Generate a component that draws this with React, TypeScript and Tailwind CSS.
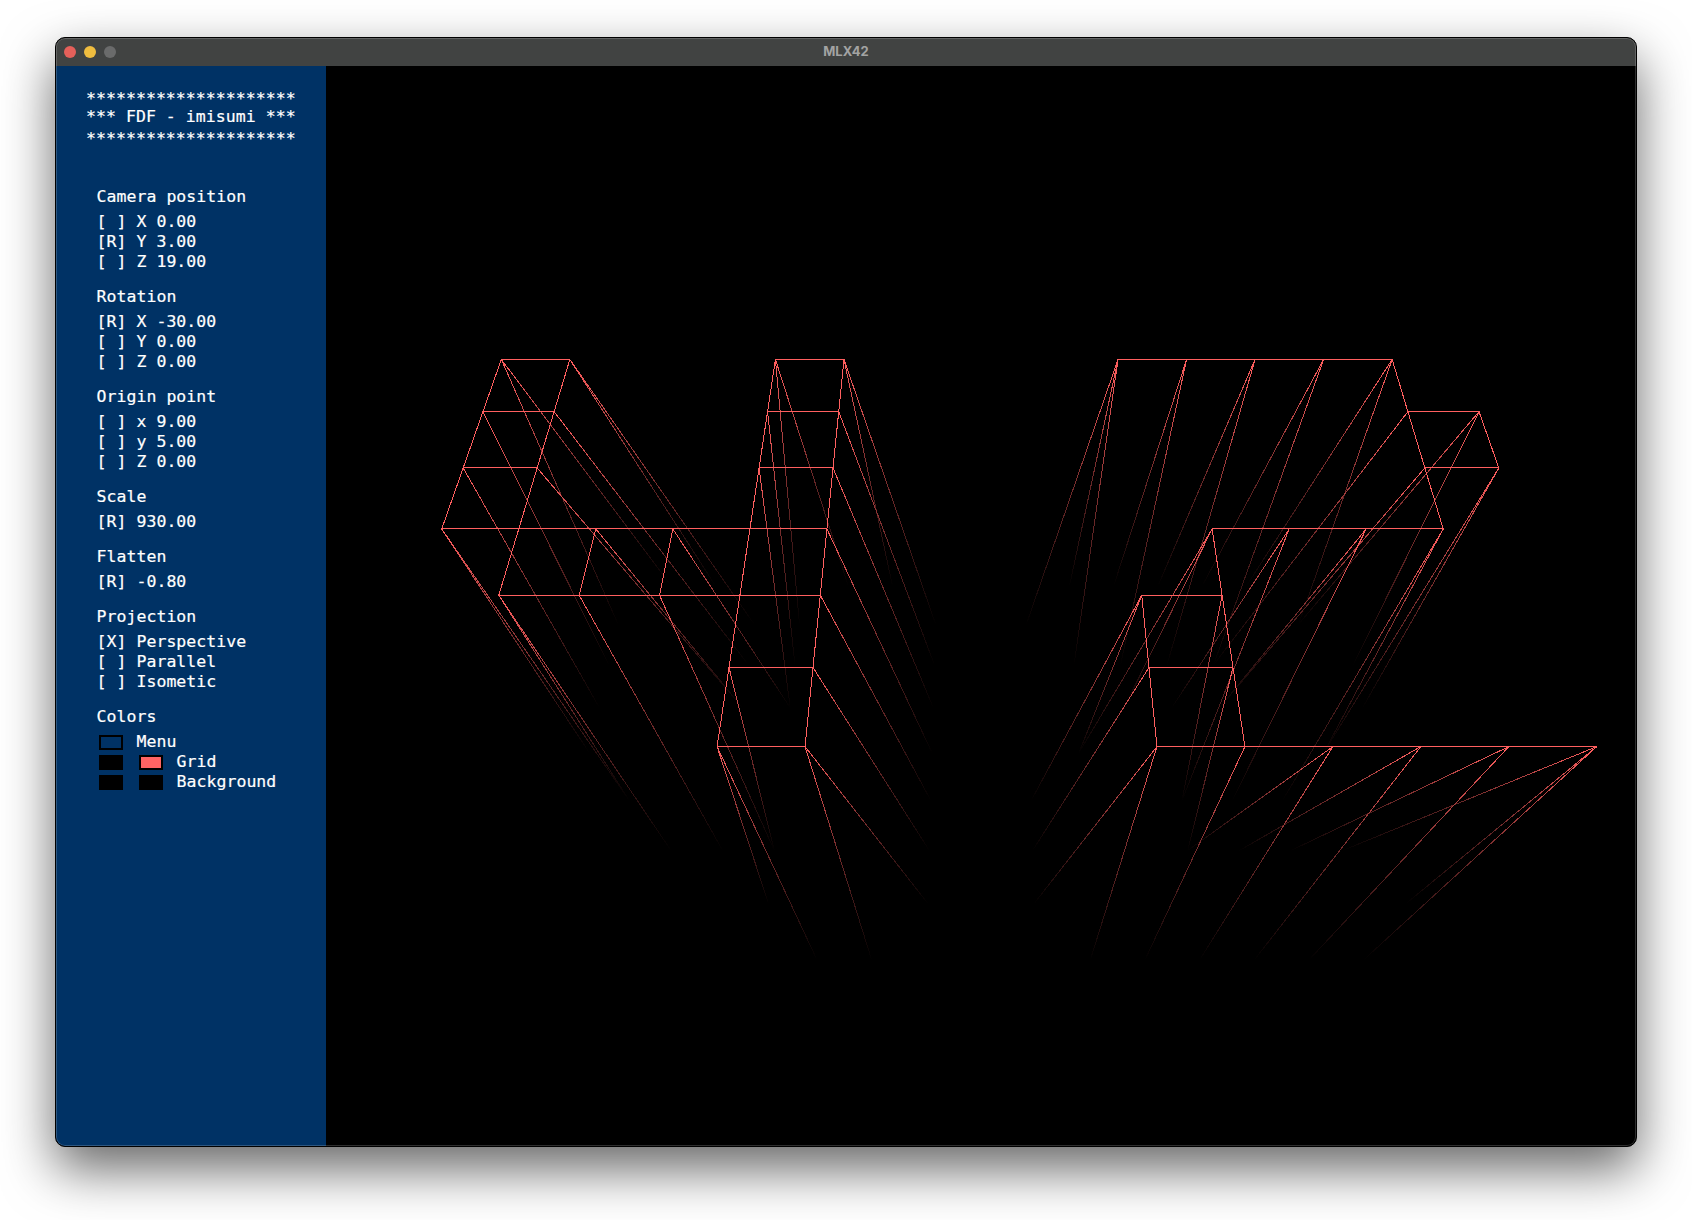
import React from "react";

const MAP = [
  "0 0 0 0 0 0 0 0 0 0 0 0 0 0 0 0 0 0 0",
  "0 0 0 0 0 0 0 0 0 0 0 0 0 0 0 0 0 0 0",
  "0 0 1 1 0 0 1 1 0 0 0 1 1 1 1 1 0 0 0",
  "0 0 1 1 0 0 1 1 0 0 0 0 0 0 0 1 1 0 0",
  "0 0 1 1 0 0 1 1 0 0 0 0 0 0 0 1 1 0 0",
  "0 0 1 1 1 1 1 1 0 0 0 0 1 1 1 1 0 0 0",
  "0 0 0 1 1 1 1 1 0 0 0 1 1 0 0 0 0 0 0",
  "0 0 0 0 0 0 1 1 0 0 0 1 1 0 0 0 0 0 0",
  "0 0 0 0 0 0 1 1 0 0 0 1 1 1 1 1 1 0 0",
  "0 0 0 0 0 0 0 0 0 0 0 0 0 0 0 0 0 0 0",
  "0 0 0 0 0 0 0 0 0 0 0 0 0 0 0 0 0 0 0",
].map((r) => r.split(" ").map(Number));

// Canvas-space projection (canvas 1310 x 1080; centre at 655, 540)
const C30 = Math.cos(Math.PI / 6);
function project(c: number, r: number) {
  const top = MAP[r][c] === 1;
  const X = c - 9;
  const Y = r - 5;
  const Z = top ? 8 : 0;
  const w = 19 - Z * C30 - Y * 0.5;
  return {
    x: 655 + (930 * X) / w,
    y: 540 + (930 * (Y * C30 + 3 - Z * 0.5)) / w,
    top,
  };
}

type Edge = { id: string; x1: number; y1: number; x2: number; y2: number; a: boolean; b: boolean };
const edges: Edge[] = [];
for (let r = 0; r < MAP.length; r++) {
  for (let c = 0; c < MAP[0].length; c++) {
    const p = project(c, r);
    const add = (q: ReturnType<typeof project>, s: string) => {
      if (!p.top && !q.top) return;
      edges.push({ id: `g${r}_${c}_${s}`, x1: p.x, y1: p.y, x2: q.x, y2: q.y, a: p.top, b: q.top });
    };
    if (c + 1 < MAP[0].length) add(project(c + 1, r), "h");
    if (r + 1 < MAP.length) add(project(c, r + 1), "v");
  }
}
edges.sort((e, f) => Number(e.a && e.b) - Number(f.a && f.b));

const RED = "#ff5f5f";
const MID = "#702a2a";

function Wireframe() {
  return (
    <svg width="1310" height="1080" viewBox="0 0 1310 1080" className="block" shapeRendering="crispEdges">
      <defs>
        {edges
          .filter((e) => !(e.a && e.b))
          .map((e) => (
            <linearGradient key={e.id} id={e.id} gradientUnits="userSpaceOnUse" x1={e.x1} y1={e.y1} x2={e.x2} y2={e.y2}>
              <stop offset="0" stopColor={e.a ? RED : "#000000"} />
              <stop offset="0.5" stopColor={MID} />
              <stop offset="1" stopColor={e.b ? RED : "#000000"} />
            </linearGradient>
          ))}
      </defs>
      {edges.map((e) => (
        <line
          key={e.id}
          x1={e.x1}
          y1={e.y1}
          x2={e.x2}
          y2={e.y2}
          stroke={e.a && e.b ? RED : `url(#${e.id})`}
          strokeWidth="1"
        />
      ))}
    </svg>
  );
}

function Row({ children }: { children: React.ReactNode }) {
  return <div className="h-5 leading-5 whitespace-pre">{children}</div>;
}

function Stars() {
  return <div className="h-5 pt-[2px] leading-5 whitespace-pre">*********************</div>;
}

function Section({ title, rows }: { title: string; rows: string[] }) {
  return (
    <section className="mb-[15px]">
      <div className="h-5 leading-5 mb-[5px] whitespace-pre">{title}</div>
      {rows.map((t) => (
        <Row key={t}>{t}</Row>
      ))}
    </section>
  );
}

function Swatch({ fill }: { fill: string }) {
  return <span className={`block w-6 h-[15px] border-2 border-black ${fill}`} />;
}

export default function App() {
  return (
    <div className="min-h-[1220px] bg-white pl-[55px] pt-[37px] overflow-hidden">
      <div className="relative w-[1582px] h-[1110px] rounded-[10px] overflow-hidden border border-black bg-black shadow-[0_22px_52px_0_rgba(0,0,0,0.6)] flex flex-col">
        <header className="relative h-[28px] shrink-0 bg-[#414342] flex items-center justify-center">
          <div className="absolute left-[8px] top-[8px] flex gap-2">
            <span className="block w-3 h-3 rounded-full bg-[#e5605a]" />
            <span className="block w-3 h-3 rounded-full bg-[#f0bd3f]" />
            <span className="block w-3 h-3 rounded-full bg-[#6a6b6b]" />
          </div>
          <span className="font-['Inter',sans-serif] text-[13px] font-bold text-[#a3a3a3]">MLX42</span>
        </header>
        <div className="flex flex-1 min-h-0">
          <aside className="w-[270px] shrink-0 bg-[#003265] text-white font-['DejaVu_Sans_Mono',monospace] text-[16.5px] tracking-[0.05px] [-webkit-text-stroke:0.2px_white] pt-[21px] pl-[30px]">
            <div className="mb-10">
              <Stars />
              <Row>*** FDF - imisumi ***</Row>
              <Stars />
            </div>
            <div className="pl-[10.5px]">
              <Section title="Camera position" rows={["[ ] X 0.00", "[R] Y 3.00", "[ ] Z 19.00"]} />
              <Section title="Rotation" rows={["[R] X -30.00", "[ ] Y 0.00", "[ ] Z 0.00"]} />
              <Section title="Origin point" rows={["[ ] x 9.00", "[ ] y 5.00", "[ ] Z 0.00"]} />
              <Section title="Scale" rows={["[R] 930.00"]} />
              <Section title="Flatten" rows={["[R] -0.80"]} />
              <Section title="Projection" rows={["[X] Perspective", "[ ] Parallel", "[ ] Isometic"]} />
              <div className="h-5 leading-5 mb-[5px]">Colors</div>
              <div className="h-5 flex items-center pl-[2.5px]">
                <Swatch fill="bg-[#003265]" />
                <span className="ml-[13.5px] leading-5">Menu</span>
              </div>
              <div className="h-5 flex items-center pl-[2.5px]">
                <Swatch fill="bg-black" />
                <span className="ml-4"><Swatch fill="bg-[#ff6464]" /></span>
                <span className="ml-[13.5px] leading-5">Grid</span>
              </div>
              <div className="h-5 flex items-center pl-[2.5px]">
                <Swatch fill="bg-black" />
                <span className="ml-4"><Swatch fill="bg-black" /></span>
                <span className="ml-[13.5px] leading-5">Background</span>
              </div>
            </div>
          </aside>
          <main className="flex-1 bg-black overflow-hidden">
            <Wireframe />
          </main>
        </div>
        <div className="absolute inset-0 rounded-[9px] pointer-events-none shadow-[inset_0_0_0_1px_rgba(255,255,255,0.18)]" />
      </div>
    </div>
  );
}
